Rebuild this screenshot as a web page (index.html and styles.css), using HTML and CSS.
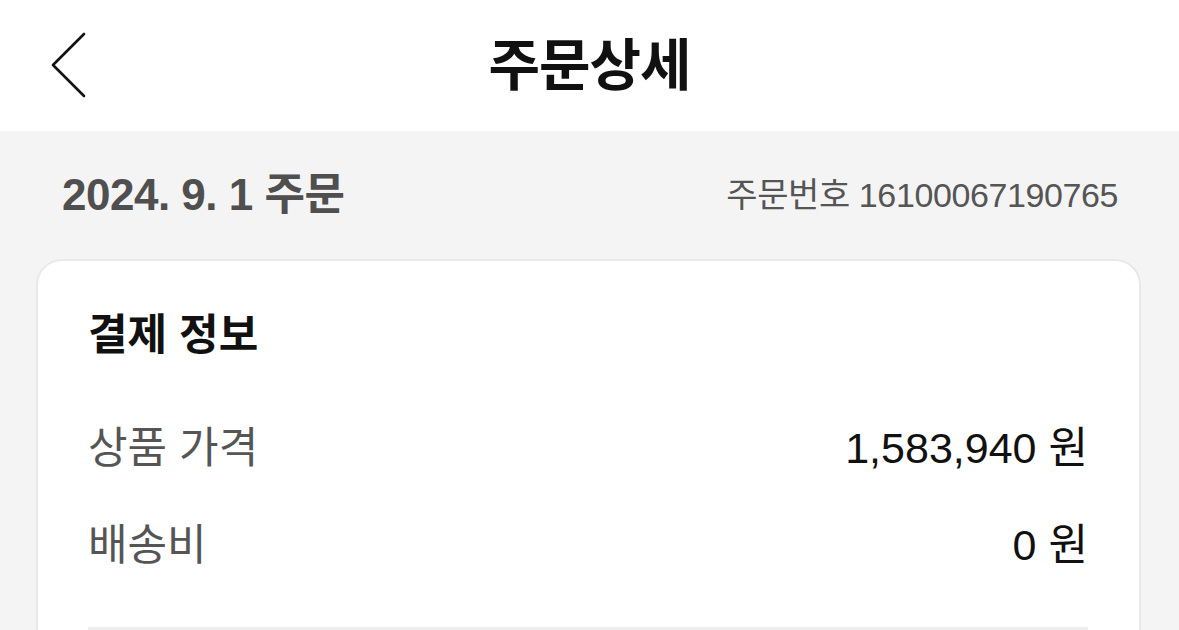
FILE: index.html
```html
<!DOCTYPE html>
<html lang="ko">
  <head>
    <meta charset="UTF-8" />
    <meta name="viewport" content="width=device-width, initial-scale=1.0" />
    <title>주문상세</title>
    <link rel="stylesheet" href="styles.css">
  </head>
  <body>
    <header class="top-bar">
      <button class="back-btn" aria-label="뒤로">
        <svg width="40" height="68" viewBox="0 0 40 68">
          <polyline points="35,2 4,33 35,64" fill="none" stroke="#111" stroke-width="2.6" stroke-linecap="round" stroke-linejoin="round" />
        </svg>
      </button>
      <h1 class="page-title">주문상세</h1>
      <span></span>
    </header>

    <main class="content">
      <div class="order-head">
        <span class="order-date">2024. 9. 1 주문</span>
        <span class="order-no">주문번호 16100067190765</span>
      </div>

      <section class="card">
        <h2 class="card-title">결제 정보</h2>
        <div class="row">
          <span class="label">상품 가격</span>
          <span class="value">1,583,940 원</span>
        </div>
        <div class="row">
          <span class="label">배송비</span>
          <span class="value">0 원</span>
        </div>
        <hr class="divider" />
      </section>
    </main>
  </body>
</html>
```

FILE: styles.css
```css
* {
  box-sizing: border-box;
}

body {
  margin: 0;
  font-family: "Liberation Sans", "Noto Sans CJK KR", sans-serif;
  background-color: #f4f4f4;
  color: #111;
  height: 630px;
  overflow: hidden;
}

.top-bar {
  height: 131px;
  background: #fff;
  display: grid;
  grid-template-columns: 1fr auto 1fr;
  align-items: center;
}

.back-btn {
  justify-self: start;
  margin-left: 49px;
  padding: 0;
  border: none;
  background: none;
  display: flex;
}

.page-title {
  margin: 0;
  font-size: 56px;
  font-weight: 700;
  letter-spacing: -1px;
  line-height: 60px;
}

.order-head {
  height: 128px;
  display: flex;
  justify-content: space-between;
  align-items: center;
  padding: 0 61px 0 62px;
}

.order-date {
  font-size: 44px;
  font-weight: 700;
  color: #4f4f4f;
  letter-spacing: -0.5px;
  line-height: 50px;
}

.order-no {
  font-size: 34px;
  color: #555;
  letter-spacing: -0.4px;
  line-height: 50px;
}

.card {
  margin: 0 38px 0 36px;
  background: #fff;
  border: 2px solid #e9e9e9;
  border-radius: 26px;
  padding: 52px 51px 0 50px;
  height: 420px;
}

.card-title {
  margin: 0 0 69px;
  font-size: 43px;
  font-weight: 700;
  line-height: 44px;
  color: #111;
}

.row {
  display: flex;
  justify-content: space-between;
  align-items: center;
  line-height: 44px;
  margin-bottom: 53px;
}

.row:last-of-type {
  margin-bottom: 60px;
}

.label {
  font-size: 43px;
  color: #555;
}

.value {
  font-size: 43px;
  color: #111;
}

.divider {
  margin: 0;
  border: none;
  height: 4px;
  background: #eeeeee;
}
```
